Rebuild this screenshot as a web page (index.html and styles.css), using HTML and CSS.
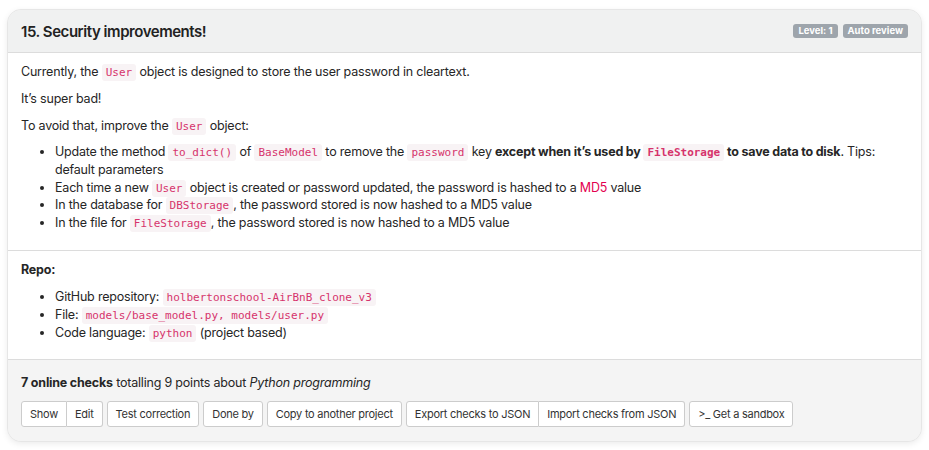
FILE: index.html
```html
<!DOCTYPE html>
<html>
<head>
<meta charset="utf-8">
<link rel="stylesheet" href="styles.css">
</head>
<body>
<div class="card">
  <div class="card-header">
    <h3 class="title">15. Security improvements!</h3>
    <div class="badges">
      <span class="badge">Level: 1</span>
      <span class="badge">Auto review</span>
    </div>
  </div>
  <div class="card-body">
    <p>Currently, the <code>User</code> object is designed to store the user password in cleartext.</p>
    <p>It’s super bad!</p>
    <p>To avoid that, improve the <code>User</code> object:</p>
    <ul>
      <li>Update the method <code>to_dict()</code> of <code>BaseModel</code> to remove the <code>password</code> key <strong>except when it’s used by <code>FileStorage</code> to save data to disk</strong>. Tips: default parameters</li>
      <li>Each time a new <code>User</code> object is created or password updated, the password is hashed to a <span class="red">MD5</span> value</li>
      <li>In the database for <code>DBStorage</code>, the password stored is now hashed to a MD5 value</li>
      <li>In the file for <code>FileStorage</code>, the password stored is now hashed to a MD5 value</li>
    </ul>
  </div>
  <div class="card-body repo">
    <p><strong>Repo:</strong></p>
    <ul>
      <li>GitHub repository: <code>holbertonschool-AirBnB_clone_v3</code></li>
      <li>File: <code>models/base_model.py, models/user.py</code></li>
      <li>Code language: <code>python</code> (project based)</li>
    </ul>
  </div>
  <div class="card-footer">
    <p class="checks"><strong>7 online checks</strong> totalling 9 points about <em>Python programming</em></p>
    <div class="actions">
      <div class="btn-group"><button class="btn">Show</button><button class="btn">Edit</button></div>
      <button class="btn">Test correction</button>
      <button class="btn">Done by</button>
      <button class="btn">Copy to another project</button>
      <div class="btn-group"><button class="btn">Export checks to JSON</button><button class="btn">Import checks from JSON</button></div>
      <button class="btn">&gt;_ Get a sandbox</button>
    </div>
  </div>
</div>
</body>
</html>
```
FILE: styles.css
```css
* { box-sizing: border-box; }
html, body { background: #ffffff; }
body {
  margin: 0;
  padding: 9px 7px 8px 7px;
  font-family: Inter, "Liberation Sans", sans-serif;
  font-size: 12.5px;
  letter-spacing: -0.2px;
  color: #262626;
}
.card {
  background: #f4f4f4;
  border: 1px solid #e6e6e6;
  border-radius: 14px;
  overflow: hidden;
  box-shadow: 0 2px 6px rgba(0,0,0,0.08);
}
.card-header {
  display: flex;
  align-items: center;
  justify-content: space-between;
  height: 43px;
  padding: 0 13px 0 13px;
  background: #f0f1f1;
  border-bottom: 1px solid #dcdcdc;
}
.title {
  margin: 0;
  font-size: 15px;
  font-weight: 600;
  color: #222;
  letter-spacing: -0.45px;
}
.badges { display: flex; gap: 5px; letter-spacing: 0; }
.badge {
  background: #9ea5ac;
  color: #fff;
  font-size: 9.5px;
  font-weight: 700;
  padding: 2px 5px;
  border-radius: 3px;
  line-height: 10px;
}
.card-body {
  background: #fff;
  padding: 10px 13px 9px 13px;
  border-bottom: 1px solid #dcdcdc;
  line-height: 18px;
}
.card-body p { margin: 0 0 9px 0; }
.card-body ul { margin: -1px 0 9px 0; padding-left: 34px; line-height: 17.8px; }
.repo { padding-top: 10px; padding-bottom: 8px; }
.repo p { margin-bottom: 9px; }
.repo ul { margin-top: 0; line-height: 18px; }
code {
  font-family: "DejaVu Sans Mono", monospace;
  font-size: 11px;
  letter-spacing: 0;
  line-height: 1;
  color: #d6336c;
  background: #f8f3f5;
  border-radius: 3px;
  padding: 2px 4px;
}
.red { color: #e3004f; }
strong { font-weight: 700; }
.card-footer {
  background: #f4f4f4;
  padding: 14px 13px 14px 13px;
}
.checks { margin: 0 0 9px 0; line-height: 18px; }
.actions { display: flex; gap: 4px; align-items: center; }
.btn-group { display: flex; }
.btn-group .btn + .btn { border-left: none; }
.btn-group .btn:first-child { border-radius: 3px 0 0 3px; }
.btn-group .btn:last-child { border-radius: 0 3px 3px 0; }
.btn {
  font-family: Inter, "Liberation Sans", sans-serif;
  font-size: 11px;
  letter-spacing: -0.25px;
  color: #333;
  background: #fff;
  border: 1px solid #cccccc;
  border-radius: 3px;
  height: 26px;
  padding: 0 8px;
  cursor: pointer;
}
```
